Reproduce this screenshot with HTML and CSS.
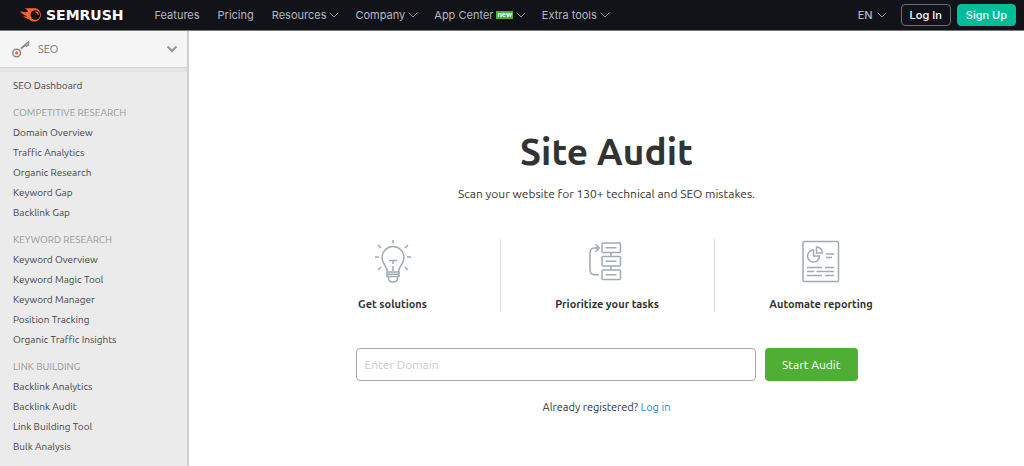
FILE: index.html
```html
<!DOCTYPE html>
<html lang="en">
<head>
<meta charset="utf-8">
<meta name="viewport" content="width=device-width, initial-scale=1">
<title>Site Audit</title>
<link rel="stylesheet" href="styles.css">
</head>
<body>
<header class="topbar">
  <a class="logo" href="#">
    <svg class="logo-mark" viewBox="0 0 24 16" aria-hidden="true">
      <path fill="#ff642d" d="M5 1h11a7 7 0 1 1-6.500 11.500C7 12 5 10.800 3.500 9c2 .6 3.600.7 4.500.5C4.500 8.500 1.500 6.500 0 4.200 2.500 5 5.500 5.300 8.500 4.800 8.200 3.200 6.500 2 5 1z"/>
      <circle cx="16" cy="8" r="5" fill="#121318"/>
      <path fill="none" stroke="#ff642d" stroke-width="1.200" d="M16 5A3 3 0 0 1 19 8"/>
    </svg>
    <span>SEMRUSH</span>
  </a>
  <nav class="nav" aria-label="Main">
    <a href="#">Features</a>
    <a href="#">Pricing</a>
    <button type="button">Resources <svg class="caret" viewBox="0 0 10 6" aria-hidden="true"><path d="M.7.700 5 5 9.300.7"/></svg></button>
    <button type="button">Company <svg class="caret" viewBox="0 0 10 6" aria-hidden="true"><path d="M.7.700 5 5 9.300.7"/></svg></button>
    <button type="button">App Center <span class="badge">new</span><svg class="caret" viewBox="0 0 10 6" aria-hidden="true"><path d="M.7.700 5 5 9.300.7"/></svg></button>
    <button type="button">Extra tools <svg class="caret" viewBox="0 0 10 6" aria-hidden="true"><path d="M.7.700 5 5 9.300.7"/></svg></button>
  </nav>
  <div class="account">
    <button class="language" type="button">EN <svg class="caret" viewBox="0 0 10 6" aria-hidden="true"><path d="M.7.700 5 5 9.300.7"/></svg></button>
    <button class="login" type="button">Log In</button>
    <button class="signup" type="button">Sign Up</button>
  </div>
</header>
<div class="layout">
  <aside class="sidebar">
    <button class="toolkit" type="button">
      <svg class="key" viewBox="0 0 18 18" aria-hidden="true">
        <circle cx="4.600" cy="13" r="3.800" fill="#fff" stroke="#85898a" stroke-width="1.500"/>
        <circle cx="4.600" cy="13" r="1.700" fill="#ff642d"/>
        <path d="m9 8.500 7.500-6" fill="none" stroke="#85898a" stroke-width="2"/>
        <path d="m11 6.500 5-4.500 1-.5-.5 4-2.500 1-.5-1.500-1 1z" fill="#a4a8a8" stroke="#85898a" stroke-width="1"/>
      </svg>
      <span>SEO</span>
      <svg class="toggle" viewBox="0 0 12 8" aria-hidden="true"><path d="m1.500 1.500 4.500 4.500 4.500-4.500"/></svg>
    </button>
    <nav class="menu" aria-label="SEO">
      <a href="#">SEO Dashboard</a>
      <h2>COMPETITIVE RESEARCH</h2>
      <a href="#">Domain Overview</a>
      <a href="#">Traffic Analytics</a>
      <a href="#">Organic Research</a>
      <a href="#">Keyword Gap</a>
      <a href="#">Backlink Gap</a>
      <h2>KEYWORD RESEARCH</h2>
      <a href="#">Keyword Overview</a>
      <a href="#">Keyword Magic Tool</a>
      <a href="#">Keyword Manager</a>
      <a href="#">Position Tracking</a>
      <a href="#">Organic Traffic Insights</a>
      <h2>LINK BUILDING</h2>
      <a href="#">Backlink Analytics</a>
      <a href="#">Backlink Audit</a>
      <a href="#">Link Building Tool</a>
      <a href="#">Bulk Analysis</a>
    </nav>
  </aside>
  <main class="main">
    <h1>Site Audit</h1>
    <p class="lead">Scan your website for 130+ technical and SEO mistakes.</p>
    <ul class="benefits">
      <li>
        <svg class="icon" viewBox="0 0 44 44" aria-hidden="true">
          <path d="M16.500 32.500c0-5-5.500-7-5.500-14a11 11 0 0 1 22 0c0 7-5.500 9-5.500 14M18 21.500h8M22 22v3M22 27v5M16 33h12v4.500H16zM16 35.200h12M17.500 38v1.500c0 2 1.500 3.500 4.500 3.500s4.500-1.500 4.500-3.500V38M22 1v3.500M7 6l3 3M37 6l-3 3M4 18h4M36 18h4M10 28l-3 3M34 28l3 3"/>
        </svg>
        <h3>Get solutions</h3>
      </li>
      <li>
        <svg class="icon" viewBox="0 0 44 44" aria-hidden="true">
          <rect x="17" y="4" width="18.500" height="9.500" rx="1"/>
          <rect x="17" y="17.500" width="18.500" height="9.500" rx="1"/>
          <rect x="17" y="31" width="18.500" height="9.500" rx="1"/>
          <path d="M20.500 8.700h11M20.500 22.200h11M20.500 35.700h11M26 13.500v4M26 27v4M14 35.700h-4q-5 0-5-5V14q0-5 5-5h4M10.500 5.200 14.200 9l-3.700 3.800"/>
        </svg>
        <h3>Prioritize your tasks</h3>
      </li>
      <li>
        <svg class="icon" viewBox="0 0 44 44" aria-hidden="true">
          <rect x="4" y="2.500" width="35.500" height="40" rx="1"/>
          <path d="M14.500 11a6 6 0 1 0 6 6h-6zM17.500 8v6h6a6 6 0 0 0-6-6zM27 15h8M27 18.500h6M8 28.500h15M26 28.500h9M8 32.500h7M17.500 32.500H35M8 36.500h15M26 36.500h9"/>
        </svg>
        <h3>Automate reporting</h3>
      </li>
    </ul>
    <form class="audit-form">
      <input type="text" aria-label="Enter Domain" placeholder="Enter Domain">
      <button type="button">Start Audit</button>
    </form>
    <p class="registered">Already registered? <a href="#">Log in</a></p>
  </main>
</div>
</body>
</html>
```
FILE: styles.css
```css
* { box-sizing: border-box; }
body {
  margin: 0;
  min-height: 100vh;
  display: flex;
  flex-direction: column;
  background: #fff;
  color: #333;
  font-family: Ubuntu, "Noto Sans", sans-serif;
  font-size: 11px;
}
button, input { font: inherit; }
button { cursor: pointer; }
a { text-decoration: none; }
h1, h2, h3, p, ul { margin: 0; padding: 0; }

.topbar {
  display: flex;
  align-items: center;
  padding: 4px 8px 4px 20px;
  background: #121318;
  border-bottom: 1px solid #77777b;
  font-family: Inter, sans-serif;
  font-weight: 500;
}
.logo {
  display: flex;
  align-items: center;
  gap: 3px;
  color: #fff;
  font: bold 14px/16px "DejaVu Sans", sans-serif;
}
.logo-mark { width: 23px; height: 16px; }
.nav { display: flex; gap: 16px; margin-left: 31px; font-weight: 400; }
.nav a { margin-right: 2px; }
.nav a, .nav button, .language {
  display: flex;
  align-items: center;
  gap: 4px;
  padding: 0;
  border: 0;
  background: none;
  color: #b4b6c0;
  white-space: nowrap;
}
.nav button { gap: 3px; }
.caret {
  width: 10px;
  height: 6px;
  fill: none;
  stroke: #92959e;
}
.badge {
  padding: 0 1px;
  background: #4fae33;
  color: #fff;
  font-size: 7px;
  line-height: 8px;
  font-weight: 700;
}
.account { display: flex; gap: 6px; margin-left: auto; }
.language { margin-right: 8px; }
.login, .signup {
  height: 22px;
  padding: 0 8px;
  border: 1px solid #6c6e79;
  border-radius: 4px;
  background: none;
  color: #fff;
}
.signup { border-color: #00bd98; background: #00bd98; }
.login, .signup { padding: 0 8px; }

.layout { flex: 1; display: flex; }
.sidebar {
  flex: none;
  width: 189px;
  border-right: 2px solid #d0d0d0;
  background: #ebebeb;
}
.toolkit {
  display: flex;
  align-items: center;
  width: 100%;
  height: 37px;
  padding: 0 9px 0 12px;
  border: 0;
  border-bottom: 1px solid #d3d3d3;
  background: #f5f5f5;
  color: #777;
}
.key { width: 18px; height: 18px; margin-right: 8px; }
.toggle {
  width: 12px;
  height: 8px;
  margin-left: auto;
  fill: none;
  stroke: #929696;
  stroke-width: 2;
}
.menu {
  padding: 4px 13px;
  border-top: 4px solid #e3e3e3;
  font-size: 10px;
  line-height: 20px;
}
.menu a { display: block; color: #444; }
.menu h2 {
  margin-top: 7px;
  color: #969a98;
  font-size: 10px;
  font-weight: 400;
}

.main {
  flex: 1;
  display: flex;
  flex-direction: column;
  align-items: center;
  padding: 96px 20px 20px;
}
h1 { font-size: 37px; line-height: 50px; }
.lead { margin-top: 7px; font-size: 12px; line-height: 20px; }
.benefits {
  display: grid;
  grid-template-columns: repeat(3, 1fr);
  width: 100%;
  max-width: 642px;
  margin-top: 35px;
  list-style: none;
}
.benefits li {
  display: flex;
  flex-direction: column;
  align-items: center;
  gap: 13px;
  min-height: 73px;
}
.benefits li + li { border-left: 1px solid #dcdcdc; }
.icon {
  width: 44px;
  height: 44px;
  fill: none;
  stroke: #9eabb2;
  stroke-width: 1.500;
}
.benefits h3 { font-size: 11px; line-height: 16px; }
.audit-form {
  display: flex;
  gap: 9px;
  width: 100%;
  max-width: 502px;
  margin-top: 36px;
}
.audit-form input {
  flex: 1;
  min-width: 0;
  height: 33px;
  padding: 0 8px;
  border: 1px solid #aaa;
  border-radius: 4px;
  font-size: 12px;
}
.audit-form input::placeholder { color: #c8ccca; }
.audit-form button {
  padding: 0 17px;
  border: 0;
  border-radius: 4px;
  background: #4fae33;
  color: #fff;
  font-size: 12px;
}
.registered { margin-top: 18px; font-size: 11px; line-height: 16px; }
.registered a { color: #2b87cc; }
```
